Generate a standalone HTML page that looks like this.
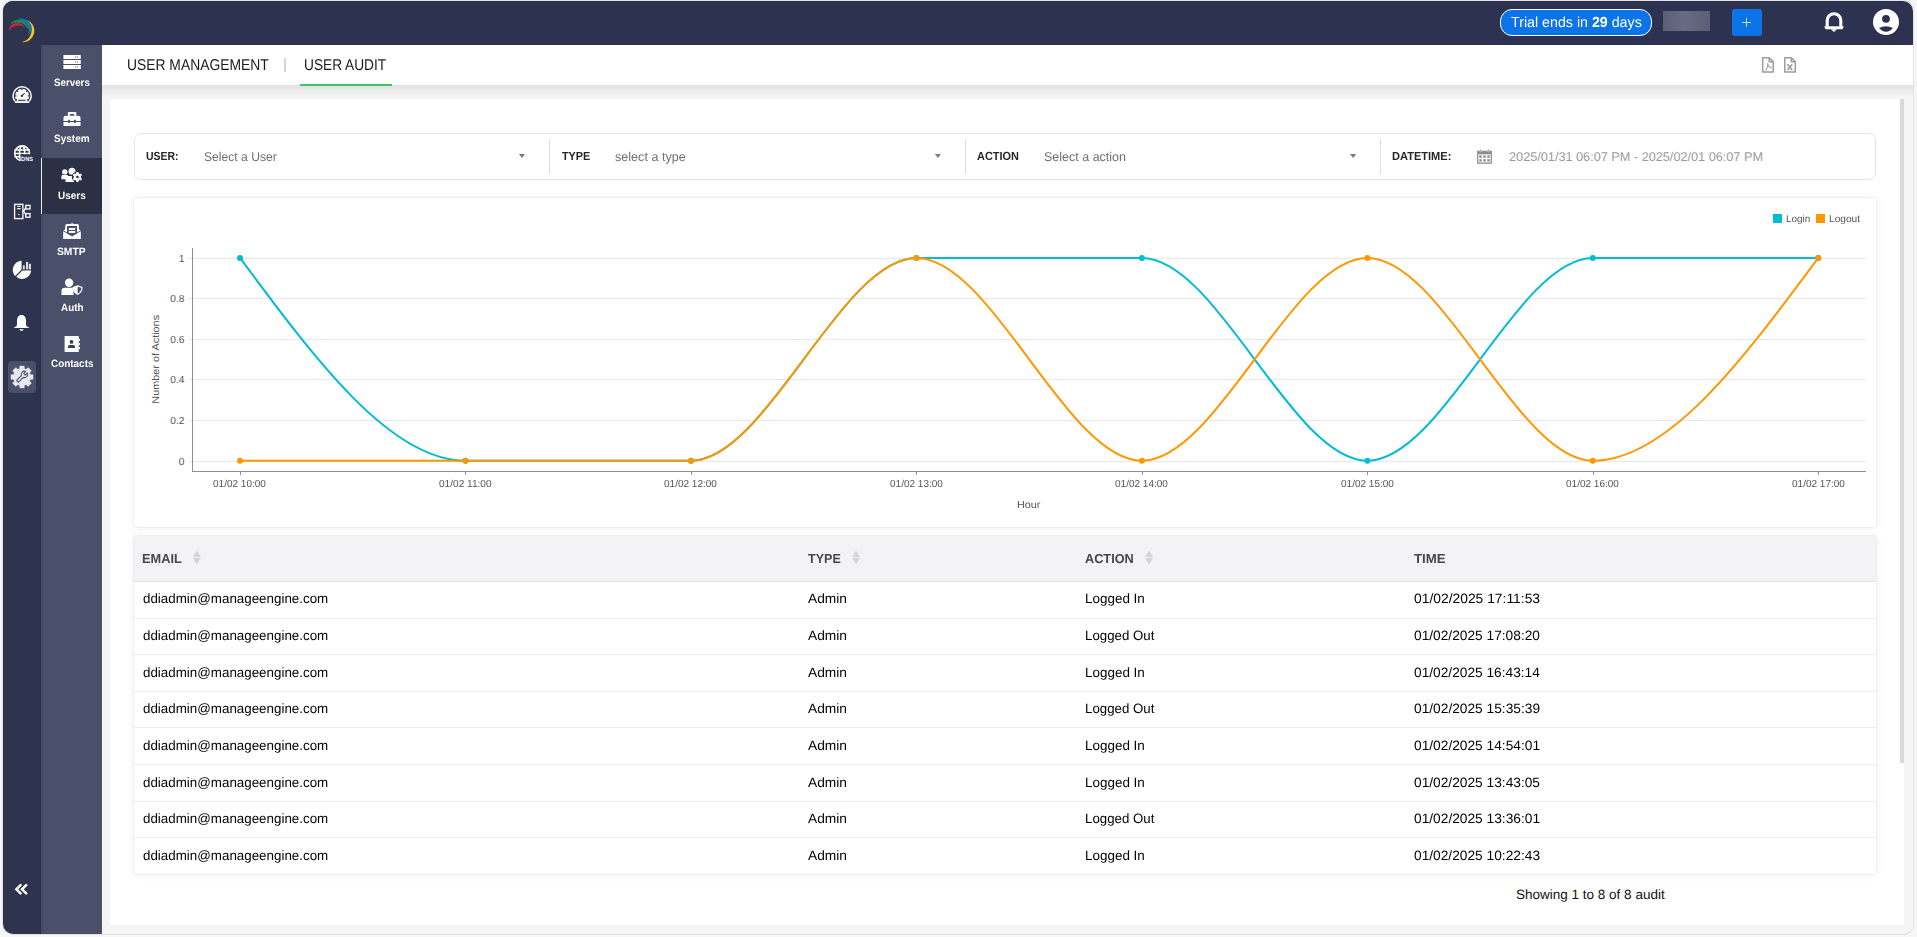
<!DOCTYPE html>
<html><head><meta charset="utf-8">
<style>
*{box-sizing:border-box;margin:0;padding:0}
html,body{width:1917px;height:937px;overflow:hidden;background:#f6f6f6;font-family:"Liberation Sans",sans-serif;text-rendering:geometricPrecision}
.a{position:absolute}
.t{position:absolute;white-space:nowrap;line-height:1;transform-origin:0 0}
svg{position:absolute;overflow:visible}
#ring{position:absolute;left:3px;top:1px;width:1910px;height:933px;border-radius:10px;box-shadow:0 0 0 1px #e2e2e2}
#app{position:absolute;left:0;top:0;width:1917px;height:937px;clip-path:inset(1px 4px 3px 3px round 10px);background:#f5f5f5}
.sl{color:#fff;font-size:10px;font-weight:700}
.fl{color:#333;font-size:11px;font-weight:700}
.ph{color:#777;font-size:13px}
.tk{color:#555;font-size:10px}
.th{color:#4a4a4a;font-size:12px;font-weight:700}
.td{color:#1a1a1a;font-size:13px}
</style></head><body>
<div id="ring"></div>
<div id="app">
  <!-- top bar -->
  <div class="a" style="left:0;top:0;width:1917px;height:45px;background:#2c3250"></div>
  <!-- left rail -->
  <div class="a" style="left:0;top:0;width:41px;height:937px;background:#2e344e"></div>
  <!-- secondary sidebar -->
  <div class="a" style="left:41px;top:45px;width:61px;height:892px;background:#4a5069"></div>
  <div class="a" style="left:41px;top:45px;width:3px;height:892px;background:linear-gradient(to right,#40455c,#4a5069)"></div>
  <!-- tab bar -->
  <div class="a" style="left:102px;top:45px;width:1815px;height:40px;background:#fff"></div>
  <div class="a" style="left:102px;top:85px;width:1815px;height:12px;background:linear-gradient(#e2e2e2,#f5f5f5)"></div>
  <!-- white card -->
  <div class="a" style="left:110px;top:99px;width:1794px;height:826px;background:#fff;border-radius:4px 0 0 0"></div>
  <!-- scrollbar thumb -->
  <div class="a" style="left:1900px;top:99px;width:4px;height:664px;background:#d9d9d9"></div>
  <!-- logo -->
  <svg style="left:0;top:0" width="45" height="45" viewBox="0 0 45 45">
    <path d="M8.40,31.30 A8.87,8.87 0 0 1 25.30,28.00 A11.20,11.20 0 0 0 8.40,31.30 Z" fill="#d31f3c"/>
    <path d="M10.00,24.80 A9.75,9.75 0 0 1 28.20,30.10 A11.49,11.49 0 0 0 10.00,24.80 Z" fill="#0a9a4c"/>
    <path d="M17.30,19.30 A10.19,10.19 0 0 1 28.00,36.20 A12.27,12.27 0 0 0 17.30,19.30 Z" fill="#1478be"/>
    <path d="M27.00,20.00 A11.44,11.44 0 0 1 22.00,42.10 A12.61,12.61 0 0 0 27.00,20.00 Z" fill="#f2c623"/>
  </svg>
  <!-- trial badge -->
  <div class="a" style="left:1500px;top:9px;width:152px;height:27px;border-radius:12px;background:#0d73e8;border:1px solid #fff"></div>
  <!-- blurred rect -->
  <div class="a" style="left:1663px;top:11px;width:47px;height:20px;background:linear-gradient(90deg,#596076,#676c82 45%,#5a5f76);filter:blur(0.7px)"></div>
  <!-- plus button -->
  <div class="a" style="left:1732px;top:9px;width:30px;height:27px;border-radius:3px;background:#0d73e8"></div>
  <div class="a" style="left:1741.9px;top:21.6px;width:9.4px;height:1.8px;background:#c4d9f8"></div>
  <div class="a" style="left:1745.7px;top:17.8px;width:1.8px;height:9.4px;background:#c4d9f8"></div>
  <!-- bell outline -->
  <svg style="left:1820px;top:8px" width="28" height="28" viewBox="0 0 28 28">
    <path d="M7.2,18.6 V12.5 A6.8,6.8 0 0 1 20.8,12.5 V18.6" fill="none" stroke="#fff" stroke-width="3.1"/>
    <path d="M4.2,18.3 H23.8 L22.5,21.3 H5.5 Z" fill="#fff"/>
    <path d="M10.9,21.2 H17 L14,24 Z" fill="#fff"/>
  </svg>
  <!-- avatar -->
  <svg style="left:1873px;top:9px" width="26" height="26" viewBox="0 0 26 26">
    <circle cx="13" cy="13" r="13" fill="#fff"/>
    <circle cx="13" cy="9.8" r="3.9" fill="#2c3250"/>
    <path d="M6,19 Q13,15.6 20,19 Q17,22.7 13,22.7 Q9,22.7 6,19 Z" fill="#2c3250"/>
  </svg>
  <div class="a" style="left:284px;top:58px;width:1.5px;height:13.5px;background:#d5d5d5"></div>
  <div class="a" style="left:300px;top:84px;width:92px;height:2px;background:#3cc36b"></div>
  <!-- export icons -->
  <svg style="left:1760px;top:55px" width="40" height="20" viewBox="0 0 40 20">
    <g fill="none" stroke="#9c9c9c" stroke-width="1.5" stroke-linejoin="round">
      <path d="M2.7,2.7 H9.2 L13.2,6.7 V16.9 H2.7 Z"/>
      <path d="M9.2,2.7 V6.7 H13.2"/>
      <path d="M5.5,15.5 Q7.5,14 7.8,8.5 Q8.3,12.5 11.8,12.5" stroke-width="1.1"/>
      <path d="M24.8,2.7 H31.3 L35.3,6.7 V16.9 H24.8 Z"/>
      <path d="M31.3,2.7 V6.7 H35.3"/>
      <path d="M27.5,9.2 L32.2,14.9 M32.2,9.2 L27.5,14.9" stroke-width="1.6"/>
    </g>
  </svg>
  <!-- speedometer -->
  <svg style="left:12px;top:86px" width="20" height="18" viewBox="0 0 20 18">
    <defs><clipPath id="spc"><rect x="-1" y="-1" width="22" height="16.6"/></clipPath></defs>
    <g clip-path="url(#spc)">
      <circle cx="10.1" cy="9.9" r="9.05" fill="none" stroke="#fff" stroke-width="1.5"/>
      <circle cx="10.1" cy="9.9" r="7.1" fill="#fff"/>
    </g>
    <rect x="2.8" y="15.3" width="14.6" height="1.7" rx="0.8" fill="#fff"/>
    <g stroke="#2e344e" stroke-width="1.1">
      <path d="M10,2.8 V4.2 M5,4.9 L6,5.9 M15.2,4.9 L14.2,5.9 M2.9,9.9 H4.4 M17.3,9.9 H15.8 M3.6,14 L4.9,13.3 M16.6,14 L15.3,13.3"/>
    </g>
    <path d="M9.8,9.9 L12.6,7.1" stroke="#2e344e" stroke-width="1.2"/>
    <circle cx="9.8" cy="9.9" r="1.15" fill="#2e344e"/>
    <rect x="6.2" y="13.7" width="7.4" height="1.1" fill="#2e344e"/>
  </svg>
  <!-- globe dns -->
  <svg style="left:13px;top:144px" width="22" height="19" viewBox="0 0 22 19">
    <defs><clipPath id="gc"><path d="M-1,-1 H23 V10.2 H7.6 V20 H-1 Z"/></clipPath></defs>
    <g clip-path="url(#gc)" fill="none" stroke="#fff" stroke-width="1.6">
      <circle cx="9.1" cy="9.3" r="7.4"/>
      <ellipse cx="9.1" cy="9.3" rx="2.6" ry="7.4"/>
      <path d="M1.5,6 H16.7 M1.5,9.5 H16.7 M1.5,12.8 H16.7"/>
    </g>
    <text x="0" y="0" font-family="Liberation Sans" font-weight="700" font-size="7.6" fill="#fff" transform="translate(8.1,16.9) scale(0.74,0.82)">DNS</text>
  </svg>
  <!-- server network -->
  <svg style="left:13px;top:202px" width="20" height="19" viewBox="0 0 20 19">
    <g fill="none" stroke="#fff" stroke-width="1.3">
      <rect x="1.6" y="2.3" width="8.3" height="14.3"/>
      <rect x="12.8" y="3.4" width="4.2" height="3.6"/>
      <rect x="12.8" y="11.6" width="4.2" height="3.6"/>
      <path d="M9.9,9.2 Q11.4,9.2 12.8,5.2 M9.9,9.2 Q11.4,9.2 12.8,13.4"/>
    </g>
    <path d="M4,4.2 H7.6 M4,6.6 H7.6" stroke="#fff" stroke-width="1.1"/>
    <circle cx="5.8" cy="12.5" r="0.7" fill="#fff"/>
  </svg>
  <!-- pie chart -->
  <svg style="left:12px;top:260px" width="20" height="20" viewBox="0 0 20 20">
    <path d="M9.6,0.8 A9.1,9.1 0 0 0 3.1,15.9 L9.6,9.4 Z" fill="#fff"/>
    <path d="M19.1,10.6 A9.1,9.1 0 0 1 4.2,16.8 L10.4,10.6 Z" fill="#fff"/>
    <rect x="10.9" y="5.3" width="1.9" height="4.1" fill="#dcdce4"/>
    <rect x="14" y="1.9" width="2.2" height="7.5" fill="#dcdce4"/>
    <rect x="16.9" y="3.8" width="2.1" height="5.6" fill="#dcdce4"/>
  </svg>
  <!-- bell solid -->
  <svg style="left:13px;top:314px" width="17" height="18" viewBox="0 0 17 18">
    <path d="M8.5,1 C11.6,1 13,3.6 13,7 V10.6 C13,12 14,13 15.8,13.3 V14 H1.2 V13.3 C3,13 4,12 4,10.6 V7 C4,3.6 5.4,1 8.5,1 Z" fill="#fff"/>
    <path d="M6.4,15.3 H10.6 Q10.2,17 8.5,17 Q6.8,17 6.4,15.3 Z" fill="#fff"/>
  </svg>
  <!-- settings active -->
  <div class="a" style="left:8px;top:361px;width:28px;height:32px;border-radius:4px;background:#4a5069"></div>
  <svg style="left:10px;top:365px" width="24" height="24" viewBox="0 0 24 24">
    <path fill="#e8e8ee" stroke="#e8e8ee" stroke-width="0.3" stroke-linejoin="round" d="M9.46,3.68L9.75,0.93L14.25,0.93L14.54,3.68A8.7,8.7 0 0 1 16.08,4.32L18.24,2.58L21.42,5.76L19.68,7.92A8.7,8.7 0 0 1 20.32,9.46L23.07,9.75L23.07,14.25L20.32,14.54A8.7,8.7 0 0 1 19.68,16.08L21.42,18.24L18.24,21.42L16.08,19.68A8.7,8.7 0 0 1 14.54,20.32L14.25,23.07L9.75,23.07L9.46,20.32A8.7,8.7 0 0 1 7.92,19.68L5.76,21.42L2.58,18.24L4.32,16.08A8.7,8.7 0 0 1 3.68,14.54L0.93,14.25L0.93,9.75L3.68,9.46A8.7,8.7 0 0 1 4.32,7.92L2.58,5.76L5.76,2.58L7.92,4.32A8.7,8.7 0 0 1 9.46,3.68Z"/>
    <path transform="translate(12.2,11.6) scale(-0.5,0.5) translate(-12,-12)" d="M22.7 19l-9.1-9.1c.9-2.3.4-5-1.5-6.9-2-2-5-2.4-7.4-1.3L9 6 6 9 1.6 4.7C.4 7.1.9 10.1 2.9 12.1c1.9 1.9 4.6 2.4 6.9 1.5l9.1 9.1c.4.4 1 .4 1.4 0l2.3-2.3c.5-.4.5-1.1.1-1.4z" fill="none" stroke="#4a5069" stroke-width="2.1" stroke-linejoin="round"/>
  </svg>
  <!-- collapse -->
  <svg style="left:14px;top:883px" width="16" height="13" viewBox="0 0 16 13">
    <path d="M6.6,2.2 L2.4,6.3 L6.6,10.4 M12.2,2.2 L8,6.3 L12.2,10.4" fill="none" stroke="#fff" stroke-width="2.5" stroke-linecap="round"/>
  </svg>
  <!-- active users bg -->
  <div class="a" style="left:41px;top:158px;width:61px;height:56px;background:#2b3044"></div>
  <div class="a" style="left:41px;top:158px;width:1px;height:56px;background:#e8e8ee"></div>
  <!-- servers icon -->
  <svg style="left:63px;top:54px" width="19" height="16" viewBox="0 0 19 16">
    <rect x="0.4" y="0.9" width="17.4" height="4.1" rx="0.4" fill="#fff"/>
    <rect x="0.4" y="6" width="17.4" height="4" rx="0.4" fill="#fff"/>
    <rect x="0.4" y="11" width="17.4" height="4.1" rx="0.4" fill="#fff"/>
    <g fill="#9c8fb0">
      <rect x="12" y="2.2" width="1" height="1.6"/><rect x="14" y="2.2" width="1" height="1.6"/>
      <rect x="12" y="7.2" width="1" height="1.6"/><rect x="14" y="7.2" width="1" height="1.6"/>
      <rect x="12" y="12.2" width="1" height="1.6"/><rect x="14" y="12.2" width="1" height="1.6"/>
    </g>
  </svg>
  <!-- toolbox -->
  <svg style="left:63px;top:111px" width="19" height="16" viewBox="0 0 19 16">
    <path d="M4.9,4.7 V0.9 H13.3 V4.7 H11 V3.1 H7.1 V4.7 Z" fill="#fff"/>
    <path d="M0.5,9.9 V6.8 Q0.5,4.7 2.6,4.7 H15.4 Q17.5,4.7 17.5,6.8 V9.9 Z" fill="#fff"/>
    <rect x="0.5" y="11" width="17" height="4" fill="#fff"/>
    <rect x="5.1" y="8.8" width="1.8" height="3.2" fill="#4a5069"/>
    <rect x="11" y="8.8" width="1.8" height="3.2" fill="#4a5069"/>
  </svg>
  <!-- users gear -->
  <svg style="left:61px;top:167px" width="22" height="16" viewBox="0 0 22 16">
    <circle cx="3.8" cy="4.9" r="2.7" fill="#fff"/>
    <path d="M0.4,12.2 V9.5 Q0.4,8.1 1.8,8.1 H6.8 V12.2 Z" fill="#fff"/>
    <circle cx="11" cy="4.3" r="3.5" fill="#fff"/>
    <path d="M4.5,14.9 V11 Q4.5,9 6.5,9 H13 V14.9 Z" fill="#fff"/>
    <circle cx="16.4" cy="10" r="5.6" fill="#2b3044"/>
    <path fill="#fff" d="M15.4,5.1 H17.4 L17.7,6.4 L18.8,7 L20,6.5 L21,8.2 L20,9.1 V10.9 L21,11.8 L20,13.5 L18.8,13 L17.7,13.6 L17.4,14.9 H15.4 L15.1,13.6 L14,13 L12.8,13.5 L11.8,11.8 L12.8,10.9 V9.1 L11.8,8.2 L12.8,6.5 L14,7 L15.1,6.4 Z"/>
    <circle cx="16.4" cy="10" r="1.3" fill="#2b3044"/>
  </svg>
  <!-- smtp envelope -->
  <svg style="left:63px;top:222px" width="19" height="18" viewBox="0 0 19 18">
    <path d="M0.4,16.9 V8.7 L2.2,7.2 V3.9 Q2.2,2.1 4,2.1 H7.3 Q9.1,0.5 10.9,2.1 H14.2 Q16,2.1 16,3.9 V7.2 L17.6,8.7 V16.9 Z" fill="#fff"/>
    <path d="M4,4 H14.1 V11.2 L9.1,14.2 L4,11.2 Z" fill="#4a5069"/>
    <rect x="5.8" y="6" width="6.4" height="1.9" fill="#fff"/>
    <rect x="5.8" y="8.9" width="6.4" height="2" fill="#fff"/>
    <path d="M0.4,8.9 L9.1,14 L17.6,8.9" fill="none" stroke="#4a5069" stroke-width="1"/>
    <path d="M0.4,9.7 L9.1,14.8 L17.6,9.7 V16.9 H0.4 Z" fill="#fff"/>
  </svg>
  <!-- auth -->
  <svg style="left:61px;top:278px" width="22" height="18" viewBox="0 0 22 18">
    <circle cx="8.1" cy="4.7" r="4.2" fill="#fff"/>
    <path d="M0.5,16.9 V12.8 Q0.5,9.8 3.5,9.8 H12.5 V16.9 Z" fill="#fff"/>
    <path d="M16.6,7.2 L21.6,9 Q21.6,14.5 16.6,17 Q11.6,14.5 11.6,9 Z" fill="#4a5069"/>
    <path d="M16.6,7.9 L21,9.5 Q21,14.2 16.6,16.3 Q12.2,14.2 12.2,9.5 Z" fill="none" stroke="#fff" stroke-width="1.2"/>
    <path d="M16.6,7.9 L12.2,9.5 Q12.2,14.2 16.6,16.3 Z" fill="#fff"/>
  </svg>
  <!-- contacts -->
  <svg style="left:64px;top:335px" width="17" height="18" viewBox="0 0 17 18">
    <rect x="0.6" y="0.9" width="14.2" height="16.1" rx="0.6" fill="#fff"/>
    <rect x="14.8" y="3.9" width="1.2" height="2.1" fill="#fff"/>
    <rect x="14.8" y="8" width="1.2" height="2.1" fill="#fff"/>
    <rect x="14.8" y="12.1" width="1.2" height="2.1" fill="#fff"/>
    <circle cx="7.5" cy="6.9" r="1.9" fill="#3a3f55"/>
    <path d="M4,12.9 V11.6 Q4,10 5.6,10 H9.4 Q11,10 11,11.6 V12.9 Z" fill="#3a3f55"/>
  </svg>
  <!-- filter bar -->
  <div class="a" style="left:134px;top:133px;width:1742px;height:47px;border:1px solid #e6e6e6;border-radius:7px;background:#fff"></div>
  <div class="a" style="left:549.1px;top:139px;width:1px;height:35px;background:#dedede"></div>
  <div class="a" style="left:965.1px;top:139px;width:1px;height:35px;background:#dedede"></div>
  <div class="a" style="left:1380.0px;top:139px;width:1px;height:35px;background:#dedede"></div>
  <svg style="left:0;top:0" width="1917" height="200" viewBox="0 0 1917 200">
    <path d="M518.9,153.9 H525.1 L522.0,158 Z" fill="#7a7a7a"/>
    <path d="M934.8,153.9 H941.0 L937.9,158 Z" fill="#7a7a7a"/>
    <path d="M1350.0,153.9 H1356.2 L1353.1,158 Z" fill="#7a7a7a"/>
  </svg>
  <svg style="left:1476px;top:148px" width="18" height="17" viewBox="0 0 18 17">
    <path d="M1.1,2.7 H15.9 V15.7 H1.1 Z" fill="#8a8a8a"/>
    <rect x="2.3" y="6.3" width="12.4" height="8.2" fill="#fff"/>
    <g fill="#8a8a8a">
      <rect x="3.3" y="7.4" width="2.4" height="2.4"/><rect x="7.3" y="7.4" width="2.4" height="2.4"/><rect x="11.3" y="7.4" width="2.4" height="2.4"/>
      <rect x="3.3" y="11.2" width="2.4" height="2.3"/><rect x="7.3" y="11.2" width="2.4" height="2.3"/><rect x="11.3" y="11.2" width="2.4" height="2.3"/>
    </g>
    <rect x="3.9" y="1.2" width="1.6" height="2.8" rx="0.7" fill="#8a8a8a" stroke="#fff" stroke-width="0.5"/>
    <rect x="11.5" y="1.2" width="1.6" height="2.8" rx="0.7" fill="#8a8a8a" stroke="#fff" stroke-width="0.5"/>
  </svg>
  <!-- chart card -->
  <div class="a" style="left:134px;top:198px;width:1742px;height:329px;background:#fff;box-shadow:0 0 1.5px rgba(0,0,0,0.15),0 1px 9px rgba(0,0,0,0.06)"></div>
  <svg style="left:0;top:0" width="1917" height="937" viewBox="0 0 1917 937">
    <line x1="189" y1="461.50" x2="1866" y2="461.50" stroke="#e8e8e8" stroke-width="1"/>
    <line x1="189" y1="420.50" x2="1866" y2="420.50" stroke="#e8e8e8" stroke-width="1"/>
    <line x1="189" y1="379.50" x2="1866" y2="379.50" stroke="#e8e8e8" stroke-width="1"/>
    <line x1="189" y1="339.50" x2="1866" y2="339.50" stroke="#e8e8e8" stroke-width="1"/>
    <line x1="189" y1="298.50" x2="1866" y2="298.50" stroke="#e8e8e8" stroke-width="1"/>
    <line x1="189" y1="258.50" x2="1866" y2="258.50" stroke="#e8e8e8" stroke-width="1"/>
    <line x1="192.5" y1="248" x2="192.5" y2="472" stroke="#8f8f8f" stroke-width="1"/>
    <line x1="192" y1="471.5" x2="1866" y2="471.5" stroke="#8f8f8f" stroke-width="1"/>
    <line x1="240.50" y1="471.5" x2="240.50" y2="475" stroke="#8f8f8f" stroke-width="1"/>
    <line x1="465.50" y1="471.5" x2="465.50" y2="475" stroke="#8f8f8f" stroke-width="1"/>
    <line x1="691.50" y1="471.5" x2="691.50" y2="475" stroke="#8f8f8f" stroke-width="1"/>
    <line x1="916.50" y1="471.5" x2="916.50" y2="475" stroke="#8f8f8f" stroke-width="1"/>
    <line x1="1142.50" y1="471.5" x2="1142.50" y2="475" stroke="#8f8f8f" stroke-width="1"/>
    <line x1="1367.50" y1="471.5" x2="1367.50" y2="475" stroke="#8f8f8f" stroke-width="1"/>
    <line x1="1593.50" y1="471.5" x2="1593.50" y2="475" stroke="#8f8f8f" stroke-width="1"/>
    <line x1="1818.50" y1="471.5" x2="1818.50" y2="475" stroke="#8f8f8f" stroke-width="1"/>
    <path d="M240.00,257.90C315.16,359.30,390.31,460.70,465.47,460.70C540.63,460.70,615.79,460.70,690.94,460.70C766.10,460.70,841.26,257.90,916.41,257.90C991.57,257.90,1066.73,257.90,1141.89,257.90C1217.04,257.90,1292.20,460.70,1367.36,460.70C1442.51,460.70,1517.67,257.90,1592.83,257.90C1667.99,257.90,1743.14,257.90,1818.30,257.90" fill="none" stroke="#00bcd4" stroke-width="2"/>
    <path d="M240.00,460.70C315.16,460.70,390.31,460.70,465.47,460.70C540.63,460.70,615.79,460.70,690.94,460.70C766.10,460.70,841.26,257.90,916.41,257.90C991.57,257.90,1066.73,460.70,1141.89,460.70C1217.04,460.70,1292.20,257.90,1367.36,257.90C1442.51,257.90,1517.67,460.70,1592.83,460.70C1667.99,460.70,1743.14,359.30,1818.30,257.90" fill="none" stroke="#ff9800" stroke-width="2"/>
    <circle cx="240.00" cy="257.90" r="3" fill="#00bcd4"/>
    <circle cx="465.47" cy="460.70" r="3" fill="#00bcd4"/>
    <circle cx="690.94" cy="460.70" r="3" fill="#00bcd4"/>
    <circle cx="916.41" cy="257.90" r="3" fill="#00bcd4"/>
    <circle cx="1141.89" cy="257.90" r="3" fill="#00bcd4"/>
    <circle cx="1367.36" cy="460.70" r="3" fill="#00bcd4"/>
    <circle cx="1592.83" cy="257.90" r="3" fill="#00bcd4"/>
    <circle cx="1818.30" cy="257.90" r="3" fill="#00bcd4"/>
    <circle cx="240.00" cy="460.70" r="3" fill="#ff9800"/>
    <circle cx="465.47" cy="460.70" r="3" fill="#ff9800"/>
    <circle cx="690.94" cy="460.70" r="3" fill="#ff9800"/>
    <circle cx="916.41" cy="257.90" r="3" fill="#ff9800"/>
    <circle cx="1141.89" cy="460.70" r="3" fill="#ff9800"/>
    <circle cx="1367.36" cy="257.90" r="3" fill="#ff9800"/>
    <circle cx="1592.83" cy="460.70" r="3" fill="#ff9800"/>
    <circle cx="1818.30" cy="257.90" r="3" fill="#ff9800"/>
    <rect x="1773" y="214" width="9" height="9" fill="#00bcd4"/>
    <rect x="1816" y="214" width="9" height="9" fill="#ff9800"/>
    <text x="184.4" y="464.95" text-anchor="end" font-family="Liberation Sans" font-size="10.2" fill="#555">0</text>
    <text x="184.4" y="423.95" text-anchor="end" font-family="Liberation Sans" font-size="10.2" fill="#555">0.2</text>
    <text x="184.4" y="382.95" text-anchor="end" font-family="Liberation Sans" font-size="10.2" fill="#555">0.4</text>
    <text x="184.4" y="342.95" text-anchor="end" font-family="Liberation Sans" font-size="10.2" fill="#555">0.6</text>
    <text x="184.4" y="301.95" text-anchor="end" font-family="Liberation Sans" font-size="10.2" fill="#555">0.8</text>
    <text x="184.4" y="261.95" text-anchor="end" font-family="Liberation Sans" font-size="10.2" fill="#555">1</text>
    <text transform="translate(158.6,359.3) rotate(-90) scale(1.1,1)" text-anchor="middle" font-family="Liberation Sans" font-size="9.9" fill="#555">Number of Actions</text>
  </svg>
  <!-- table -->
  <div class="a" style="left:134px;top:536px;width:1742px;height:338px;background:#fff;box-shadow:0 0 1.5px rgba(0,0,0,0.15),0 1px 9px rgba(0,0,0,0.06)"></div>
  <div class="a" style="left:134px;top:536px;width:1742px;height:46px;background:#f3f3f5;border-bottom:1px solid #e2e2e2"></div>
  <div class="a" style="left:134px;top:618px;width:1742px;height:1px;background:#ececec"></div>
  <div class="a" style="left:134px;top:654px;width:1742px;height:1px;background:#ececec"></div>
  <div class="a" style="left:134px;top:691px;width:1742px;height:1px;background:#ececec"></div>
  <div class="a" style="left:134px;top:727px;width:1742px;height:1px;background:#ececec"></div>
  <div class="a" style="left:134px;top:764px;width:1742px;height:1px;background:#ececec"></div>
  <div class="a" style="left:134px;top:801px;width:1742px;height:1px;background:#ececec"></div>
  <div class="a" style="left:134px;top:837px;width:1742px;height:1px;background:#ececec"></div>
  <svg style="left:0;top:0" width="1917" height="600" viewBox="0 0 1917 600">
    <path d="M196.8,550.6 L200.7,556.9 H192.9 Z M192.9,558.1 H200.7 L196.8,564.4 Z" fill="#d5d5d5"/>
    <path d="M856.1,550.6 L860.0,556.9 H852.2 Z M852.2,558.1 H860.0 L856.1,564.4 Z" fill="#d5d5d5"/>
    <path d="M1149.1,550.6 L1153.0,556.9 H1145.2 Z M1145.2,558.1 H1153.0 L1149.1,564.4 Z" fill="#d5d5d5"/>
  </svg>
  <div class="t" id="trial" style="left:1510.62px;top:16.09px;font-size:14.55px;font-weight:400;color:#fff;transform:scaleX(0.9779);">Trial ends in <b>29</b> days</div>
  <div class="t" id="tab1" style="left:126.85px;top:57.99px;font-size:15.65px;font-weight:400;color:#1a1a1a;transform:scaleX(0.8862);">USER MANAGEMENT</div>
  <div class="t" id="tab2" style="left:304.06px;top:57.99px;font-size:15.65px;font-weight:400;color:#1a1a1a;transform:scaleX(0.8752);">USER AUDIT</div>
  <div class="t" id="sb0" style="left:53.81px;top:77.84px;font-size:10.6px;font-weight:700;color:#fff;transform:scaleX(0.9224);">Servers</div>
  <div class="t" id="sb1" style="left:54.00px;top:134.44px;font-size:10.6px;font-weight:700;color:#fff;transform:scaleX(0.9441);">System</div>
  <div class="t" id="sb2" style="left:57.78px;top:190.94px;font-size:10.6px;font-weight:700;color:#fff;transform:scaleX(0.9418);">Users</div>
  <div class="t" id="sb3" style="left:57.39px;top:247.09px;font-size:10.6px;font-weight:700;color:#fff;transform:scaleX(0.9726);">SMTP</div>
  <div class="t" id="sb4" style="left:60.63px;top:302.64px;font-size:10.6px;font-weight:700;color:#fff;transform:scaleX(0.9337);">Auth</div>
  <div class="t" id="sb5" style="left:50.63px;top:358.54px;font-size:10.6px;font-weight:700;color:#fff;transform:scaleX(0.9369);">Contacts</div>
  <div class="t" id="f1" style="left:146.07px;top:151.10px;font-size:11.8px;font-weight:700;color:#262626;transform:scaleX(0.8854);">USER:</div>
  <div class="t" id="f3" style="left:562.06px;top:151.10px;font-size:11.8px;font-weight:700;color:#262626;transform:scaleX(0.9182);">TYPE</div>
  <div class="t" id="f5" style="left:976.53px;top:151.10px;font-size:11.8px;font-weight:700;color:#262626;transform:scaleX(0.9264);">ACTION</div>
  <div class="t" id="f7" style="left:1391.88px;top:151.10px;font-size:11.8px;font-weight:700;color:#262626;transform:scaleX(0.9363);">DATETIME:</div>
  <div class="t" id="f2" style="left:203.96px;top:150.88px;font-size:12.7px;font-weight:400;color:#707070;transform:scaleX(0.9567);">Select a User</div>
  <div class="t" id="f4" style="left:615.49px;top:150.88px;font-size:12.7px;font-weight:400;color:#707070;transform:scaleX(0.9924);">select a type</div>
  <div class="t" id="f6" style="left:1044.44px;top:150.88px;font-size:12.7px;font-weight:400;color:#707070;transform:scaleX(0.9853);">Select a action</div>
  <div class="t" id="f8" style="left:1509.04px;top:150.98px;font-size:12.7px;font-weight:400;color:#9a9a9a;">2025/01/31 06:07 PM - 2025/02/01 06:07 PM</div>
  <div class="t" id="lg1" style="left:1786.12px;top:215.32px;font-size:10.0px;font-weight:400;color:#555;transform:scaleX(0.9902);">Login</div>
  <div class="t" id="lg2" style="left:1829.20px;top:215.32px;font-size:10.0px;font-weight:400;color:#555;transform:scaleX(1.0159);">Logout</div>
  <div class="t" id="xl0" style="left:213.48px;top:480.25px;font-size:10.2px;font-weight:400;color:#555;transform:scaleX(0.9823);">01/02 10:00</div>
  <div class="t" id="xl1" style="left:438.95px;top:480.25px;font-size:10.2px;font-weight:400;color:#555;transform:scaleX(0.9907);">01/02 11:00</div>
  <div class="t" id="xl2" style="left:664.42px;top:480.25px;font-size:10.2px;font-weight:400;color:#555;transform:scaleX(0.9823);">01/02 12:00</div>
  <div class="t" id="xl3" style="left:889.89px;top:480.25px;font-size:10.2px;font-weight:400;color:#555;transform:scaleX(0.9823);">01/02 13:00</div>
  <div class="t" id="xl4" style="left:1115.37px;top:480.25px;font-size:10.2px;font-weight:400;color:#555;transform:scaleX(0.9823);">01/02 14:00</div>
  <div class="t" id="xl5" style="left:1340.84px;top:480.25px;font-size:10.2px;font-weight:400;color:#555;transform:scaleX(0.9823);">01/02 15:00</div>
  <div class="t" id="xl6" style="left:1566.31px;top:480.25px;font-size:10.2px;font-weight:400;color:#555;transform:scaleX(0.9823);">01/02 16:00</div>
  <div class="t" id="xl7" style="left:1791.78px;top:480.25px;font-size:10.2px;font-weight:400;color:#555;transform:scaleX(0.9823);">01/02 17:00</div>
  <div class="t" id="hour" style="left:1016.76px;top:501.30px;font-size:10.2px;font-weight:400;color:#555;transform:scaleX(1.0576);">Hour</div>
  <div class="t" id="h1" style="left:142.39px;top:551.82px;font-size:13.0px;font-weight:700;color:#474747;transform:scaleX(0.9832);">EMAIL</div>
  <div class="t" id="h2" style="left:807.96px;top:551.82px;font-size:13.0px;font-weight:700;color:#474747;transform:scaleX(0.9658);">TYPE</div>
  <div class="t" id="h3" style="left:1084.58px;top:551.82px;font-size:13.0px;font-weight:700;color:#474747;transform:scaleX(0.9785);">ACTION</div>
  <div class="t" id="h4" style="left:1413.87px;top:551.82px;font-size:13.0px;font-weight:700;color:#474747;transform:scaleX(1.0168);">TIME</div>
  <div class="t" id="re0" style="left:142.60px;top:592.24px;font-size:13.5px;font-weight:400;color:#000;transform:scaleX(0.9901);">ddiadmin@manageengine.com</div>
  <div class="t" id="rt0" style="left:807.94px;top:592.24px;font-size:13.5px;font-weight:400;color:#000;transform:scaleX(1.0189);">Admin</div>
  <div class="t" id="ra0" style="left:1084.67px;top:592.24px;font-size:13.5px;font-weight:400;color:#000;transform:scaleX(0.9962);">Logged In</div>
  <div class="t" id="rm0" style="left:1413.78px;top:592.24px;font-size:13.5px;font-weight:400;color:#000;transform:scaleX(1.0259);">01/02/2025 17:11:53</div>
  <div class="t" id="re1" style="left:142.60px;top:628.90px;font-size:13.5px;font-weight:400;color:#000;transform:scaleX(0.9901);">ddiadmin@manageengine.com</div>
  <div class="t" id="rt1" style="left:807.94px;top:628.90px;font-size:13.5px;font-weight:400;color:#000;transform:scaleX(1.0189);">Admin</div>
  <div class="t" id="ra1" style="left:1084.68px;top:628.90px;font-size:13.5px;font-weight:400;color:#000;transform:scaleX(0.9827);">Logged Out</div>
  <div class="t" id="rm1" style="left:1413.79px;top:628.90px;font-size:13.5px;font-weight:400;color:#000;transform:scaleX(1.0169);">01/02/2025 17:08:20</div>
  <div class="t" id="re2" style="left:142.60px;top:665.56px;font-size:13.5px;font-weight:400;color:#000;transform:scaleX(0.9901);">ddiadmin@manageengine.com</div>
  <div class="t" id="rt2" style="left:807.94px;top:665.56px;font-size:13.5px;font-weight:400;color:#000;transform:scaleX(1.0189);">Admin</div>
  <div class="t" id="ra2" style="left:1084.67px;top:665.56px;font-size:13.5px;font-weight:400;color:#000;transform:scaleX(0.9962);">Logged In</div>
  <div class="t" id="rm2" style="left:1413.79px;top:665.56px;font-size:13.5px;font-weight:400;color:#000;transform:scaleX(1.0159);">01/02/2025 16:43:14</div>
  <div class="t" id="re3" style="left:142.60px;top:702.21px;font-size:13.5px;font-weight:400;color:#000;transform:scaleX(0.9901);">ddiadmin@manageengine.com</div>
  <div class="t" id="rt3" style="left:807.94px;top:702.21px;font-size:13.5px;font-weight:400;color:#000;transform:scaleX(1.0189);">Admin</div>
  <div class="t" id="ra3" style="left:1084.68px;top:702.21px;font-size:13.5px;font-weight:400;color:#000;transform:scaleX(0.9827);">Logged Out</div>
  <div class="t" id="rm3" style="left:1413.79px;top:702.21px;font-size:13.5px;font-weight:400;color:#000;transform:scaleX(1.0176);">01/02/2025 15:35:39</div>
  <div class="t" id="re4" style="left:142.60px;top:738.87px;font-size:13.5px;font-weight:400;color:#000;transform:scaleX(0.9901);">ddiadmin@manageengine.com</div>
  <div class="t" id="rt4" style="left:807.94px;top:738.87px;font-size:13.5px;font-weight:400;color:#000;transform:scaleX(1.0189);">Admin</div>
  <div class="t" id="ra4" style="left:1084.67px;top:738.87px;font-size:13.5px;font-weight:400;color:#000;transform:scaleX(0.9962);">Logged In</div>
  <div class="t" id="rm4" style="left:1413.79px;top:738.87px;font-size:13.5px;font-weight:400;color:#000;transform:scaleX(1.0176);">01/02/2025 14:54:01</div>
  <div class="t" id="re5" style="left:142.60px;top:775.53px;font-size:13.5px;font-weight:400;color:#000;transform:scaleX(0.9901);">ddiadmin@manageengine.com</div>
  <div class="t" id="rt5" style="left:807.94px;top:775.53px;font-size:13.5px;font-weight:400;color:#000;transform:scaleX(1.0189);">Admin</div>
  <div class="t" id="ra5" style="left:1084.67px;top:775.53px;font-size:13.5px;font-weight:400;color:#000;transform:scaleX(0.9962);">Logged In</div>
  <div class="t" id="rm5" style="left:1413.79px;top:775.53px;font-size:13.5px;font-weight:400;color:#000;transform:scaleX(1.0173);">01/02/2025 13:43:05</div>
  <div class="t" id="re6" style="left:142.60px;top:812.19px;font-size:13.5px;font-weight:400;color:#000;transform:scaleX(0.9901);">ddiadmin@manageengine.com</div>
  <div class="t" id="rt6" style="left:807.94px;top:812.19px;font-size:13.5px;font-weight:400;color:#000;transform:scaleX(1.0189);">Admin</div>
  <div class="t" id="ra6" style="left:1084.68px;top:812.19px;font-size:13.5px;font-weight:400;color:#000;transform:scaleX(0.9827);">Logged Out</div>
  <div class="t" id="rm6" style="left:1413.79px;top:812.19px;font-size:13.5px;font-weight:400;color:#000;transform:scaleX(1.0176);">01/02/2025 13:36:01</div>
  <div class="t" id="re7" style="left:142.60px;top:848.84px;font-size:13.5px;font-weight:400;color:#000;transform:scaleX(0.9901);">ddiadmin@manageengine.com</div>
  <div class="t" id="rt7" style="left:807.94px;top:848.84px;font-size:13.5px;font-weight:400;color:#000;transform:scaleX(1.0189);">Admin</div>
  <div class="t" id="ra7" style="left:1084.67px;top:848.84px;font-size:13.5px;font-weight:400;color:#000;transform:scaleX(0.9962);">Logged In</div>
  <div class="t" id="rm7" style="left:1413.79px;top:848.84px;font-size:13.5px;font-weight:400;color:#000;transform:scaleX(1.0175);">01/02/2025 10:22:43</div>
  <div class="t" id="show" style="left:1516.05px;top:888.24px;font-size:13.5px;font-weight:400;color:#111;">Showing 1 to 8 of 8 audit</div>
</div>
</body></html>
